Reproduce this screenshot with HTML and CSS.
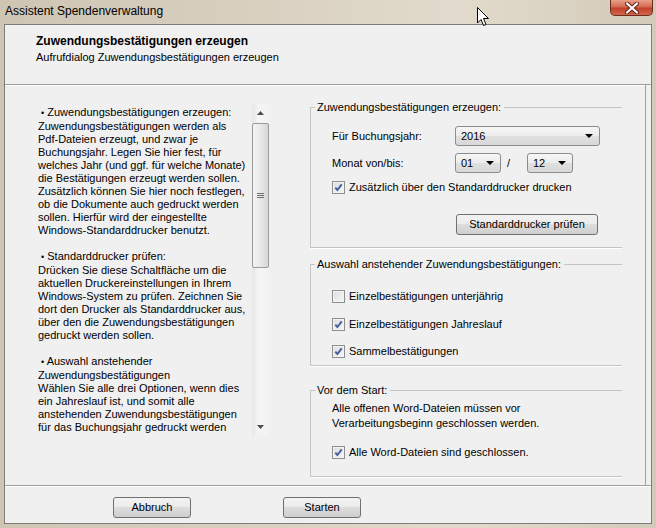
FILE: index.html
```html
<!DOCTYPE html>
<html lang="de">
<head>
    <meta charset="UTF-8">
    <title>Assistent Spendenverwaltung</title>
    <link rel="stylesheet" href="styles.css">
</head>
<body>
    <div class="window">
        <!-- Title bar -->
        <div class="titlebar">
            <span class="title">Assistent Spendenverwaltung</span>
            <div class="close-btn">
                <svg width="16" height="12" viewBox="0 0 16 12">
                    <path d="M3 1.5 L13 10.5 M13 1.5 L3 10.5" stroke="#5a1c12" stroke-width="4" stroke-linecap="round"/>
                    <path d="M3 1.5 L13 10.5 M13 1.5 L3 10.5" stroke="#fff" stroke-width="2.2" stroke-linecap="round"/>
                </svg>
            </div>
        </div>

        <div class="client">
            <!-- Wizard header -->
            <div class="header">
                <div class="header-title">Zuwendungsbestätigungen erzeugen</div>
                <div class="header-sub">Aufrufdialog Zuwendungsbestätigungen erzeugen</div>
            </div>

            <div class="main">
                <!-- Help text with scrollbar -->
                <div class="helpbox">
                    <div class="helptext">
                        &nbsp;<span class="bullet">•</span> Zuwendungsbestätigungen erzeugen:<br>
                        Zuwendungsbestätigungen werden als<br>
                        Pdf-Dateien erzeugt, und zwar je<br>
                        Buchungsjahr. Legen Sie hier fest, für<br>
                        welches Jahr (und ggf. für welche Monate)<br>
                        die Bestätigungen erzeugt werden sollen.<br>
                        Zusätzlich können Sie hier noch festlegen,<br>
                        ob die Dokumente auch gedruckt werden<br>
                        sollen. Hierfür wird der eingestellte<br>
                        Windows-Standarddrucker benutzt.<br>
                        <br>
                        &nbsp;<span class="bullet">•</span> Standarddrucker prüfen:<br>
                        Drücken Sie diese Schaltfläche um die<br>
                        aktuellen Druckereinstellungen in Ihrem<br>
                        Windows-System zu prüfen. Zeichnen Sie<br>
                        dort den Drucker als Standarddrucker aus,<br>
                        über den die Zuwendungsbestätigungen<br>
                        gedruckt werden sollen.<br>
                        <br>
                        &nbsp;<span class="bullet">•</span> Auswahl anstehender<br>
                        Zuwendungsbestätigungen<br>
                        Wählen Sie alle drei Optionen, wenn dies<br>
                        ein Jahreslauf ist, und somit alle<br>
                        anstehenden Zuwendungsbestätigungen<br>
                        für das Buchungsjahr gedruckt werden
                    </div>
                    <div class="scrollbar">
                        <div class="sb-arrow">
                            <svg width="7" height="4" viewBox="0 0 7 4"><path d="M0 4 L3.5 0 L7 4 Z" fill="#4d4d4d"/></svg>
                        </div>
                        <div class="sb-track">
                            <div class="sb-thumb">
                                <div class="grip"></div>
                                <div class="grip"></div>
                                <div class="grip"></div>
                            </div>
                        </div>
                        <div class="sb-arrow">
                            <svg width="7" height="4" viewBox="0 0 7 4"><path d="M0 0 L3.5 4 L7 0 Z" fill="#4d4d4d"/></svg>
                        </div>
                    </div>
                </div>

                <!-- Option groups -->
                <div class="groups">
                    <fieldset class="group group-create">
                        <legend>Zuwendungsbestätigungen erzeugen:</legend>
                        <div class="row row-year">
                            <span class="label">Für Buchungsjahr:</span>
                            <div class="combo combo-year">2016<span class="arrow"></span></div>
                        </div>
                        <div class="row row-month">
                            <span class="label">Monat von/bis:</span>
                            <div class="combo combo-month">01<span class="arrow"></span></div>
                            <span class="slash">/</span>
                            <div class="combo combo-month">12<span class="arrow"></span></div>
                        </div>
                        <div class="check-row check-print">
                            <span class="checkbox checked"></span>
                            <span>Zusätzlich über den Standarddrucker drucken</span>
                        </div>
                        <div class="btn-row">
                            <div class="button btn-printer">Standarddrucker prüfen</div>
                        </div>
                    </fieldset>

                    <fieldset class="group group-select">
                        <legend>Auswahl anstehender Zuwendungsbestätigungen:</legend>
                        <div class="check-row first">
                            <span class="checkbox"></span>
                            <span>Einzelbestätigungen unterjährig</span>
                        </div>
                        <div class="check-row">
                            <span class="checkbox checked"></span>
                            <span>Einzelbestätigungen Jahreslauf</span>
                        </div>
                        <div class="check-row">
                            <span class="checkbox checked"></span>
                            <span>Sammelbestätigungen</span>
                        </div>
                    </fieldset>

                    <fieldset class="group group-start">
                        <legend>Vor dem Start:</legend>
                        <p class="note">Alle offenen Word-Dateien müssen vor<br>Verarbeitungsbeginn geschlossen werden.</p>
                        <div class="check-row">
                            <span class="checkbox checked"></span>
                            <span>Alle Word-Dateien sind geschlossen.</span>
                        </div>
                    </fieldset>
                </div>
            </div>

            <!-- Footer buttons -->
            <div class="footer">
                <div class="button btn-footer">Abbruch</div>
                <div class="button btn-footer">Starten</div>
            </div>
        </div>

        <!-- Mouse pointer from the screenshot -->
        <svg class="cursor" width="13" height="20" viewBox="0 0 13 20">
            <path d="M0.5 0.5 L0.5 16 L4 12.5 L6.5 18.5 L9 17.5 L6.5 11.5 L11.5 11.5 Z" fill="#fff" stroke="#000" stroke-width="1"/>
        </svg>
    </div>
</body>
</html>
```

FILE: styles.css
```css
/* Base page: the whole viewport is the dialog window */
body {
    margin: 0;
    font-family: 'Liberation Sans', Arial, sans-serif;
    font-size: 11px;
    color: #000;
}

.window {
    position: relative;
    width: 656px;
    height: 528px;
    box-sizing: border-box;
    padding: 0 4px 4px 4px;
    background: linear-gradient(90deg, #cfc5b3 0%, #d9d0c0 40%, #e2dbcd 70%, #d3cab8 100%);
    overflow: hidden;
}

/* Title bar */
.titlebar {
    height: 24px;
    display: flex;
    align-items: center;
    justify-content: space-between;
}

.title {
    font-size: 12px;
    margin-left: 1px;
    margin-top: -3px;
    color: #000;
}

.close-btn {
    width: 43px;
    height: 16px;
    margin-top: -8px;
    margin-right: -1px;
    box-sizing: border-box;
    border: 1px solid #6d2a1f;
    border-top: none;
    border-radius: 0 0 5px 5px;
    background: linear-gradient(#e8a08c 0%, #d46a50 45%, #c0412a 55%, #d2674a 100%);
    display: flex;
    justify-content: center;
    align-items: center;
}

/* Client area */
.client {
    height: 500px;
    box-sizing: border-box;
    border: 1px solid #7d7d7d;
    background-color: #f0f0f0;
    display: flex;
    flex-direction: column;
}

.header {
    height: 50px;
    border-bottom: 1px solid #a0a0a0;
    padding: 9px 0 0 31px;
}

.header-title {
    font-size: 12px;
    font-weight: bold;
    line-height: 15px;
}

.header-sub {
    line-height: 15px;
    margin-top: 1px;
}

.main {
    height: 400px;
    display: flex;
    padding-left: 25px;
    margin-right: 5px;
    border-right: 1px solid #a0a0a0;
    box-shadow: inset 0 1px 0 #fff;
}

/* Help text */
.helpbox {
    display: flex;
    margin-top: 19px;
    height: 331px;
    width: 240px;
}

.helptext {
    width: 214px;
    padding: 2px 0 0 8px;
    line-height: 13px;
    white-space: nowrap;
    overflow: hidden;
}

.bullet {
    font-size: 9px;
}

.scrollbar {
    width: 17px;
    display: flex;
    flex-direction: column;
    background: linear-gradient(90deg, #e6e6e6, #f5f5f5 40%, #f2f2f2);
}

.sb-arrow {
    height: 17px;
    display: flex;
    justify-content: center;
    align-items: center;
}

.sb-track {
    flex: 1;
    padding-top: 2px;
}

.sb-thumb {
    height: 145px;
    box-sizing: border-box;
    border: 1px solid #9b9b9b;
    border-radius: 2px;
    background: linear-gradient(90deg, #f4f4f4 0%, #e8e8e8 50%, #d6d6d6 100%);
    display: flex;
    flex-direction: column;
    justify-content: center;
    align-items: center;
    gap: 1px;
}

.grip {
    width: 7px;
    height: 1px;
    background-color: #6f6f6f;
}

/* Group boxes */
.groups {
    margin-left: 40px;
    width: 312px;
    padding-top: 16px;
}

.group {
    margin: 0;
    padding: 0 0 0 21px;
    border: 1px solid #c4c4c4;
    border-right: none;
    box-shadow: 0 1px 0 #fff;
}

.group legend {
    padding: 0 3px 0 2px;
    margin-left: -17px;
    line-height: 13px;
}

.row {
    display: flex;
    align-items: center;
    height: 20px;
}

.row-year {
    margin-top: 12px;
}

.row-month {
    margin-top: 7px;
}

.label {
    width: 123px;
}

.combo {
    position: relative;
    height: 20px;
    box-sizing: border-box;
    border: 1px solid #8c8c8c;
    border-radius: 3px;
    background: linear-gradient(#f6f6f6 0%, #ececec 50%, #e0e0e0 50%, #d8d8d8 100%);
    padding-left: 5px;
    line-height: 19px;
}

.combo-year {
    width: 145px;
}

.combo-month {
    width: 46px;
}

.combo .arrow {
    position: absolute;
    right: 6px;
    top: 7px;
    border-left: 4px solid transparent;
    border-right: 4px solid transparent;
    border-top: 4px solid #000;
}

.slash {
    width: 26px;
    padding-left: 6px;
    box-sizing: border-box;
}

.check-row {
    display: flex;
    align-items: center;
    height: 16px;
    gap: 4px;
    margin-top: 12px;
}

.check-print {
    margin-top: 6px;
}

.group-select .check-row.first {
    margin-top: 17px;
}

.group-select .check-row:last-child {
    margin-top: 11px;
}

.checkbox {
    width: 13px;
    height: 13px;
    box-sizing: border-box;
    border: 1px solid #8e8f8f;
    background: linear-gradient(135deg, #dcdcdc, #f8f8f8);
    box-shadow: inset 0 0 0 1px #f4f4f4;
    flex-shrink: 0;
}

.checkbox.checked {
    background-image: url("data:image/svg+xml;utf8,<svg xmlns='http://www.w3.org/2000/svg' width='11' height='11' viewBox='0 0 11 11'><path d='M2.3 5.6 L4.4 8 L8.7 2.4' fill='none' stroke='%23435f9c' stroke-width='2'/></svg>"), linear-gradient(135deg, #dcdcdc, #f8f8f8);
    background-repeat: no-repeat;
}

.btn-row {
    margin-top: 19px;
    padding-left: 124px;
    padding-bottom: 12px;
}

.button {
    height: 21px;
    box-sizing: border-box;
    border: 1px solid #707070;
    border-radius: 3px;
    background: linear-gradient(#f2f2f2 0%, #ebebeb 50%, #dddddd 50%, #cfcfcf 100%);
    text-align: center;
    line-height: 19px;
}

.btn-printer {
    width: 142px;
}

.group-select {
    margin-top: 10px;
    padding-bottom: 6px;
}

.group-start {
    margin-top: 18px;
    padding-bottom: 16px;
}

.note {
    margin: 4px 0 0 0;
    line-height: 15px;
}

.group-start .check-row {
    margin-top: 13px;
}

/* Footer */
.footer {
    flex: 1;
    border-top: 1px solid #a0a0a0;
    box-shadow: inset 0 1px 0 #fff;
    display: flex;
    align-items: flex-start;
    padding: 11px 0 0 108px;
    gap: 92px;
}

.btn-footer {
    width: 78px;
}

/* Mouse pointer overlay */
.cursor {
    position: absolute;
    left: 477px;
    top: 7px;
}
```
